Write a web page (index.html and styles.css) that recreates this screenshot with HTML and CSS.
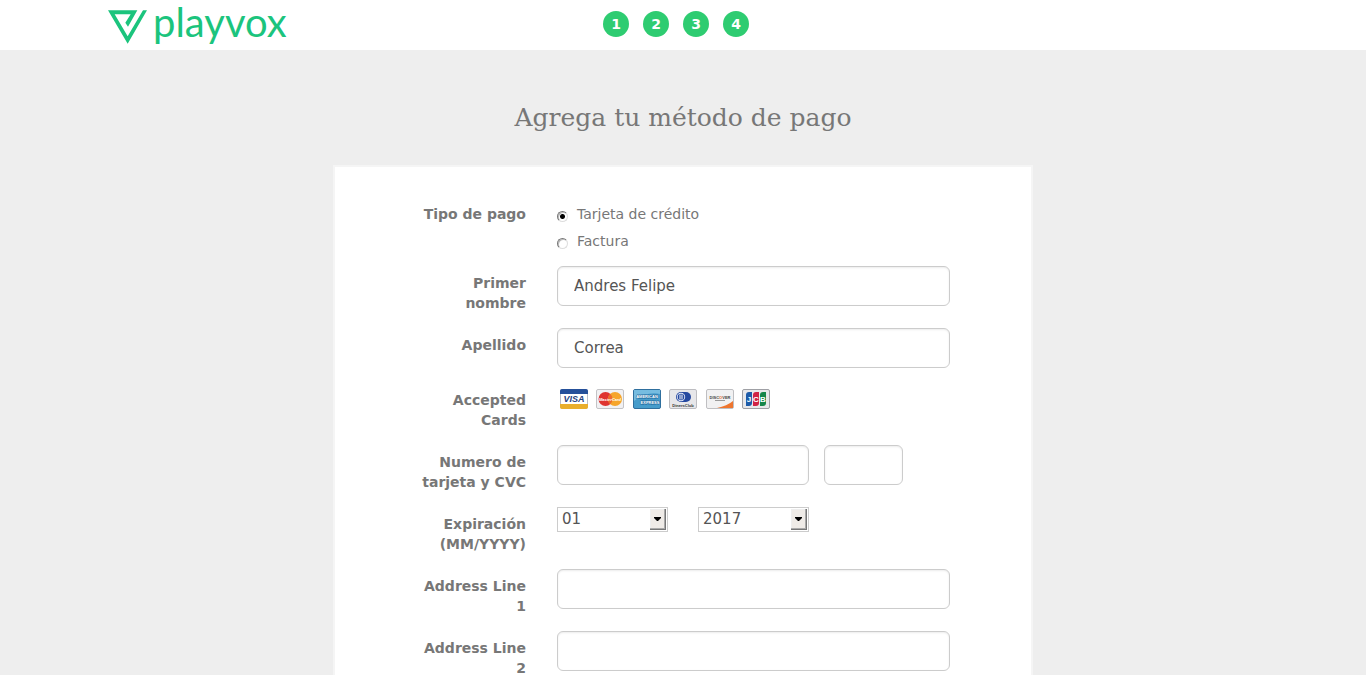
FILE: index.html
```html
<!DOCTYPE html>
<html lang="es">
<head>
<meta charset="utf-8">
<meta name="viewport" content="width=device-width, initial-scale=1">
<title>Playvox - Método de pago</title>
<link rel="stylesheet" href="styles.css">
</head>
<body>
<header class="topbar">
  <a class="logo" href="#" aria-label="playvox">
    <svg class="logo-mark" viewBox="24 30 117 101" aria-hidden="true"><path d="M24 30H112L84 80L76 68L92 42H44L83 108L129 30H141L83 131Z"/></svg>
    <span class="logo-name">playvox</span>
  </a>
  <ol class="steps">
    <li class="step">1</li>
    <li class="step">2</li>
    <li class="step">3</li>
    <li class="step">4</li>
  </ol>
</header>
<main class="page">
  <h1 class="title">Agrega tu método de pago</h1>
  <form class="panel">
    <div class="row" role="radiogroup" aria-labelledby="type-label">
      <span class="label" id="type-label">Tipo de pago</span>
      <div>
        <label class="choice"><input class="radio" type="radio" name="type" checked>Tarjeta de crédito</label>
        <label class="choice"><input class="radio" type="radio" name="type">Factura</label>
      </div>
    </div>
    <div class="row">
      <label class="label" for="first">Primer nombre</label>
      <input class="field" id="first" type="text" value="Andres Felipe">
    </div>
    <div class="row">
      <label class="label" for="last">Apellido</label>
      <input class="field" id="last" type="text" value="Correa">
    </div>
    <div class="row">
      <span class="label">Accepted Cards</span>
      <div class="cards">
        <svg class="card" viewBox="0 0 28 20" role="img" aria-label="Visa">
          <rect x=".5" y=".5" width="27" height="19" rx="1.5" fill="#fff" stroke="#b9bec9"/>
          <path d="M0 5V2Q0 0 2 0H26Q28 0 28 2V5Z" fill="#25509a"/>
          <path d="M0 15H28V18Q28 20 26 20H2Q0 20 0 18Z" fill="#e9ae2c"/>
          <text x="14" y="13" class="visa">VISA</text>
        </svg>
        <svg class="card" viewBox="0 0 28 20" role="img" aria-label="MasterCard">
          <rect x=".5" y=".5" width="27" height="19" rx="1.5" fill="#f1f1f3" stroke="#c3c3c6"/>
          <circle cx="9.5" cy="10" r="7" fill="#df3430"/>
          <circle cx="19" cy="10" r="7" fill="#f6a52b"/>
          <path d="M14.2 4.8A7 7 0 0 1 14.2 15.2A7 7 0 0 1 14.2 4.8Z" fill="#ed6c2d"/>
          <text x="14" y="12" class="master">MasterCard</text>
        </svg>
        <svg class="card" viewBox="0 0 28 20" role="img" aria-label="American Express">
          <rect x=".5" y=".5" width="27" height="19" rx="1.5" fill="#469ccb" stroke="#2f6f9e"/>
          <path d="M1 1H27V5Q14 2 1 12Z" fill="#76bce0"/>
          <text x="14" y="9" class="amex">AMERICAN</text>
          <text x="17" y="15" class="amex">EXPRESS</text>
        </svg>
        <svg class="card" viewBox="0 0 28 20" role="img" aria-label="Diners Club">
          <rect x=".5" y=".5" width="27" height="19" rx="1.5" fill="#e7e7ea" stroke="#bdbdc1"/>
          <rect x="7" y="3" width="15" height="10" rx="5" fill="#2448a0"/>
          <circle cx="12" cy="8" r="4.2" fill="#e9eefa"/>
          <circle cx="12" cy="8" r="3.3" fill="#2448a0"/>
          <path d="M11 5.5V10.5M13 5.5V10.5" stroke="#fff"/>
          <text x="14" y="17.5" class="diners">DinersClub</text>
        </svg>
        <svg class="card" viewBox="0 0 28 20" role="img" aria-label="Discover">
          <rect x=".5" y=".5" width="27" height="19" rx="1.5" fill="#f1f1f2" stroke="#bfbfc2"/>
          <path d="M11 19Q21 17 27 12V19Z" fill="#ee762f"/>
          <text x="14" y="9.5" class="discover">DISC<tspan fill="#e96a25">O</tspan>VER</text>
          <path d="M9 11.5H19" stroke="#9a9a9a"/>
        </svg>
        <svg class="card" viewBox="0 0 28 20" role="img" aria-label="JCB">
          <rect x=".5" y=".5" width="27" height="19" rx="1.5" fill="#e8e8ea" stroke="#9fa0a5"/>
          <path d="M4 17V6Q4 3 7 3H10V14Q10 17 7 17Z" fill="#1d5ba8"/>
          <path d="M11 17V6Q11 3 14 3H17V14Q17 17 14 17Z" fill="#d02245"/>
          <path d="M18 17V6Q18 3 21 3H24V14Q24 17 21 17Z" fill="#16864a"/>
          <text x="7" y="13" class="jcb">J</text>
          <text x="14" y="13" class="jcb">C</text>
          <text x="21" y="13" class="jcb">B</text>
        </svg>
      </div>
    </div>
    <div class="row">
      <label class="label" for="number">Numero de tarjeta y CVC</label>
      <div class="number-group">
        <input class="field" id="number" type="text">
        <input class="field" type="text" aria-label="CVC">
      </div>
    </div>
    <div class="row">
      <label class="label" for="month">Expiración (MM/YYYY)</label>
      <div class="expiry">
        <span class="picker">
          <select class="select" id="month"><option>01</option><option>02</option><option>03</option></select>
          <svg class="arrow" viewBox="0 0 16 21" aria-hidden="true"><path d="M4 8H11V9L8 12H7L4 9Z"/></svg>
        </span>
        <span class="picker">
          <select class="select" aria-label="Año"><option>2017</option><option>2018</option><option>2019</option></select>
          <svg class="arrow" viewBox="0 0 16 21" aria-hidden="true"><path d="M4 8H11V9L8 12H7L4 9Z"/></svg>
        </span>
      </div>
    </div>
    <div class="row">
      <label class="label" for="line1">Address Line 1</label>
      <input class="field" id="line1" type="text">
    </div>
    <div class="row">
      <label class="label" for="line2">Address Line 2</label>
      <input class="field" id="line2" type="text">
    </div>
  </form>
</main>
</body>
</html>
```
FILE: styles.css
```css
* {
  box-sizing: border-box;
}

body {
  margin: 0;
  background: #eee;
  color: #777;
  font: 14px/20px "DejaVu Sans", Verdana, sans-serif;
}

.topbar {
  display: grid;
  grid-template-columns: 1fr auto 1fr;
  align-items: start;
  height: 50px;
  padding: 0 122px 0 108px;
  background: #fff;
}

.logo {
  display: flex;
  align-items: flex-start;
  gap: 6px;
  padding-top: 10px;
  color: #1bc47d;
  text-decoration: none;
}

.logo-mark {
  width: 39px;
  height: 34px;
  fill: currentColor;
}

.logo-name {
  font: 40px/24px Lato, sans-serif;
}

.steps {
  display: flex;
  gap: 14px;
  margin: 0;
  padding: 11px 0 0;
  list-style: none;
}

.step {
  width: 26px;
  height: 26px;
  border-radius: 50%;
  background: #2ecc71;
  color: #fff;
  font-weight: bold;
  line-height: 26px;
  text-align: center;
}

.title {
  margin: 50px 0 30px;
  font: 25px/35px "DejaVu Serif", serif;
  text-align: center;
}

.panel {
  max-width: 700px;
  margin: 0 auto;
  padding: 30px 81px 30px 85px;
  border: 2px solid #f5f5f5;
  background: #fff;
}

.row {
  display: grid;
  grid-template-columns: 106px 1fr;
  align-items: start;
  column-gap: 31px;
  margin-bottom: 15px;
}

.label {
  padding-top: 7px;
  font-weight: bold;
  text-align: right;
}

.choice {
  display: flex;
  align-items: center;
  gap: 9px;
  padding-top: 7px;
}

.radio {
  appearance: none;
  width: 11px;
  height: 11px;
  margin: 5px 0 0;
  border: 1px solid;
  border-color: #777 #ddd #ddd #777;
  border-radius: 50%;
  background: #fff;
  box-shadow: inset 1px 1px #bbb;
}

.radio:checked {
  background: radial-gradient(circle, #000 2px, #fff 3px);
}

.field {
  width: 100%;
  min-width: 0;
  height: 40px;
  padding: 0 16px;
  border: 1px solid #ccc;
  border-radius: 6px;
  background: #fff;
  box-shadow: inset 0 1px 2px rgba(0, 0, 0, 0.08);
  color: #555;
  font: 15px "DejaVu Sans", Verdana, sans-serif;
}

.cards {
  display: flex;
  justify-content: space-between;
  width: 210px;
  margin: 6px 0 0 3px;
}

.card {
  width: 28px;
  height: 20px;
}

.card text {
  font-family: "Liberation Sans", Arial, sans-serif;
  font-weight: bold;
  text-anchor: middle;
}

.card .visa {
  fill: #25427f;
  font-size: 9px;
  font-style: italic;
}

.card .master {
  fill: #fff;
  font-size: 4px;
  font-style: italic;
}

.card .amex {
  fill: #fff;
  stroke: #2069a0;
  stroke-width: 1px;
  paint-order: stroke;
  font-size: 4px;
}

.card .diners {
  fill: #333;
  font-size: 4px;
}

.card .discover {
  fill: #444;
  font-size: 4px;
}

.card .jcb {
  fill: #fff;
  font-size: 8px;
}

.number-group {
  display: grid;
  grid-template-columns: 252px 79px;
  gap: 15px;
}

.expiry {
  display: flex;
  gap: 30px;
}

.picker {
  position: relative;
  width: 111px;
  height: 25px;
}

.select {
  appearance: none;
  display: block;
  width: 100%;
  height: 100%;
  padding: 0 20px 2px 4px;
  border: 1px solid #ccc;
  border-radius: 0;
  background: #fff;
  color: #555;
  font: 15px "DejaVu Sans", Verdana, sans-serif;
}

.arrow {
  position: absolute;
  top: 2px;
  right: 2px;
  width: 16px;
  height: 21px;
  background: #efebe7;
  box-shadow: inset -1px -1px #777, inset -2px -2px #aaa, inset 1px 1px #eee;
  pointer-events: none;
}
```
